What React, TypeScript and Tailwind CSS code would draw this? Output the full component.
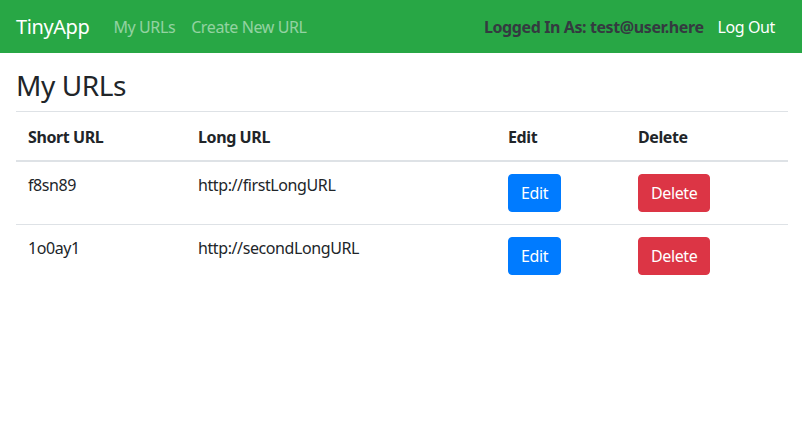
const urls = [
  { short: "f8sn89", long: "http://firstLongURL" },
  { short: "1o0ay1", long: "http://secondLongURL" },
];

export default function App() {
  return (
    <div className="min-h-[429px] bg-white text-[#212529] font-['Noto_Sans',sans-serif] tracking-[-0.4px]">
      {/* Navbar */}
      <nav className="h-[53px] bg-[#28a745] px-4 flex items-center justify-between">
        <div className="flex items-center">
          <a className="text-white text-[20px] mr-6">TinyApp</a>
          <a className="text-white/50 text-[16px] mr-4">My URLs</a>
          <a className="text-white/50 text-[16px]">Create New URL</a>
        </div>
        <div className="flex items-center pr-[11px]">
          <span className="text-[#343a40] font-bold text-[16px] mr-3.5">
            Logged In As: test@user.here
          </span>
          <a className="text-white text-[16px]">Log Out</a>
        </div>
      </nav>

      {/* Content */}
      <main className="pl-4 pr-[14px]">
        <h2 className="text-[28px] leading-[1.2] mt-4 mb-2">My URLs</h2>
        <table className="w-full table-fixed border-collapse text-[16px] leading-6">
          <colgroup>
            <col className="w-[170px]" />
            <col className="w-[310px]" />
            <col className="w-[130px]" />
            <col />
          </colgroup>
          <thead>
            <tr className="border-t border-[#dee2e6] border-b-2">
              <th className="text-left font-bold px-3 pt-[13px] pb-[11px]">Short URL</th>
              <th className="text-left font-bold px-3 pt-[13px] pb-[11px]">Long URL</th>
              <th className="text-left font-bold px-3 pt-[13px] pb-[11px]">Edit</th>
              <th className="text-left font-bold px-3 pt-[13px] pb-[11px]">Delete</th>
            </tr>
          </thead>
          <tbody>
            {urls.map((u) => (
              <tr key={u.short} className="border-t border-[#dee2e6] first:border-t-0">
                <td className="px-3 pt-[11px] pb-[13px] align-top">{u.short}</td>
                <td className="px-3 pt-[11px] pb-[13px] align-top">{u.long}</td>
                <td className="p-3 align-top">
                  <button className="bg-[#007bff] text-white rounded px-3 py-[6px] leading-6 border border-[#007bff]">
                    Edit
                  </button>
                </td>
                <td className="p-3 align-top">
                  <button className="bg-[#dc3545] text-white rounded px-3 py-[6px] leading-6 border border-[#dc3545]">
                    Delete
                  </button>
                </td>
              </tr>
            ))}
          </tbody>
        </table>
      </main>
    </div>
  );
}
